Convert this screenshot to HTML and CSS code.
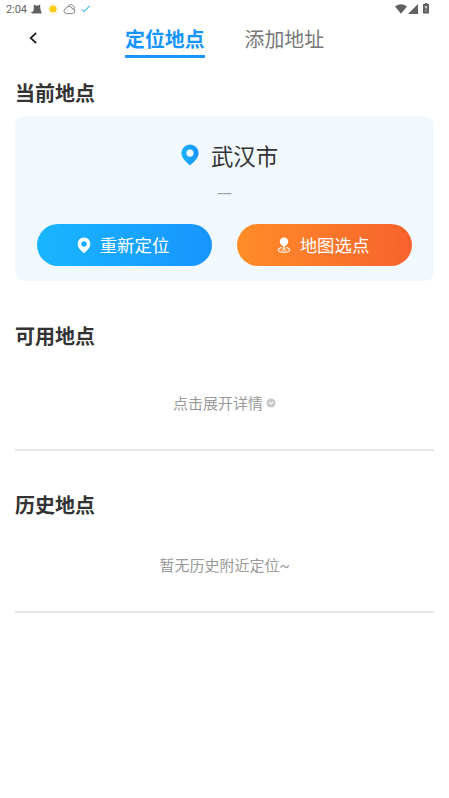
FILE: index.html
```html
<!DOCTYPE html>
<html lang="zh-CN">
<head>
<meta charset="utf-8">
<title>定位地点</title>
<link rel="stylesheet" href="styles.css">
</head>
<body>
<div class="status">
  <span class="time">2:04</span>
  <svg class="cat" width="11" height="10" viewBox="0 0 12 10"><path d="M3 0l2 1.300h3L10 0v4l.8 3 .9 2.800H1.200L0 8.500l1.200-.7 1 .4L3 5z" fill="#606060"/></svg>
  <svg class="sun" width="12" height="12" viewBox="0 0 12 12"><path d="M6 .8v10.400M.8 6h10.400M2.300 2.300l7.400 7.400M9.700 2.300L2.300 9.700" stroke="#fbdc7c" stroke-width="1.100"/><circle cx="6" cy="6" r="3.300" fill="#fccb12"/></svg>
  <svg class="cloud" width="13" height="12" viewBox="0 0 13 12" fill="none" stroke="#777" stroke-width=".9"><path d="M3.400 10.600a2.600 2.600 0 0 1-.5-5.100 3.400 3.400 0 0 1 6.300.1 2.500 2.500 0 0 1 .2 5zM4.800 3.300a3.300 3.300 0 1 1 6 3.500"/></svg>
  <svg class="check" width="10" height="8" viewBox="0 0 10 8"><path d="M1 4.200l2.200 2.200L8.600 1" fill="none" stroke="#55bde8" stroke-width="1.100"/></svg>
  <svg class="wifi" width="12" height="10" viewBox="0 0 12 10"><path d="M0 2.500Q6-2.100 12 2.500L6 9.800z" fill="#606060"/></svg>
  <svg class="signal" width="10" height="10" viewBox="0 0 10 10"><path d="M10 0v10H0z" fill="#606060"/></svg>
  <svg class="battery" width="6" height="11" viewBox="0 0 6 11"><path d="M1.700 0h2.600v1H6v9.500H0V1h1.700z" fill="#606060"/><path d="M1.500 3.200h3L3 6.300zM2.500 7h1v1.300h-1z" fill="#ddd"/></svg>
</div>
<header class="header">
  <svg class="back" width="9" height="12" viewBox="0 0 9 12"><path d="M7.200 1L1.600 6l5.600 5" fill="none" stroke="#222" stroke-width="1.700"/></svg>
  <nav class="tabs">
    <a class="tab active">定位地点</a>
    <a class="tab">添加地址</a>
  </nav>
</header>
<main>
  <section class="current">
    <h2>当前地点</h2>
    <div class="card">
      <div class="city">
        <svg width="18" height="22" viewBox="0 0 18 22"><defs><linearGradient id="pin"><stop stop-color="#1bb2ff"/><stop offset="1" stop-color="#1795ff"/></linearGradient></defs><path fill="url(#pin)" fill-rule="evenodd" d="M9 .5a8.600 8.600 0 0 1 8.600 8.600C17.600 14 13 18 9 21.500C5 18 .4 14 .4 9.100A8.600 8.600 0 0 1 9 .5zm0 5a3.600 3.600 0 1 0 0 7.200 3.600 3.600 0 0 0 0-7.200z"/></svg>
        <span>武汉市</span>
      </div>
      <div class="address">---</div>
      <div class="actions">
        <button class="button relocate">
          <svg width="14" height="17" viewBox="0 0 14 17"><path fill="#fff" fill-rule="evenodd" d="M7 .5a6.400 6.400 0 0 1 6.400 6.400C13.400 10.500 10 13.500 7 16.200 4 13.500.6 10.500.6 6.900A6.400 6.400 0 0 1 7 .5zm0 3.700a2.800 2.800 0 1 0 0 5.600 2.800 2.800 0 0 0 0-5.600z"/></svg>
          <span>重新定位</span>
        </button>
        <button class="button pick">
          <svg width="14" height="17" viewBox="0 0 14 17"><circle cx="7" cy="4.700" r="4.200" fill="#fff"/><path d="M7 8v5" stroke="#fff" stroke-width="1.500"/><path d="M5 10.500c-5 .6-5.300 4.700 2 4.700s7-4.100 2-4.700" fill="none" stroke="#ffe4d6" stroke-width="1.400"/><path d="M4.500 13h5" stroke="#ffe4d6"/></svg>
          <span>地图选点</span>
        </button>
      </div>
    </div>
  </section>
  <section class="available">
    <h2>可用地点</h2>
    <div class="notice"><span>点击展开详情</span><svg width="10" height="10" viewBox="0 0 10 10"><circle cx="5" cy="5" r="4.600" fill="#c9c9c9"/><path d="M2.800 4.100L5 6l2.200-1.900" fill="none" stroke="#fff" stroke-width="1.100"/></svg></div>
  </section>
  <section class="history">
    <h2>历史地点</h2>
    <div class="notice"><span>暂无历史附近定位<span class="latin">~</span></span></div>
  </section>
</main>
</body>
</html>
```
FILE: styles.css
```css
* { box-sizing: border-box; }
body {
  margin: 0;
  background: #fff;
  color: #333;
  font-family: "Noto Sans CJK SC", sans-serif;
}
svg { display: block; flex: none; }
.status {
  display: flex;
  align-items: center;
  height: 18px;
  padding: 0 20.5px 0 6px;
}
.time {
  width: 25px;
  font: 11px/18px Roboto, sans-serif;
  letter-spacing: -.1px;
  padding-top: 1px;
  color: #666;
}
.sun { margin-left: 5px; }
.cloud { margin-left: 4px; }
.check { margin-left: 5px; }
.wifi { margin-left: auto; }
.signal { margin-left: 1px; }
.battery { margin-left: 5px; margin-top: -1px; }
.header {
  display: flex;
  height: 42px;
  padding-left: 29px;
}
.back { margin-top: 14px; }
.tabs {
  display: flex;
  gap: 40px;
  margin-left: 87px;
}
.tab {
  height: 40px;
  padding-top: 1px;
  font-size: 19.9px;
  line-height: 40px;
  color: #777;
}
.active {
  border-bottom: 3px solid #1795ff;
  border-radius: 1px;
  color: #1795ff;
  font-weight: 700;
}
main { padding: 0 15px; }
h2 {
  margin: 0;
  font-size: 20px;
  line-height: 30px;
  font-weight: 700;
}
.current { padding-top: 18px; }
.card {
  height: 165px;
  margin-top: 8px;
  padding: 22px 22px 0;
  border-radius: 9px;
  background: #f1f9ff;
}
.city {
  display: flex;
  align-items: center;
  justify-content: center;
  gap: 12px;
  height: 34px;
  padding-left: 10px;
  font-size: 22.4px;
  line-height: 34px;
}
.city span { margin-top: -1px; }
.address {
  height: 52px;
  font: 17px/42px Roboto, sans-serif;
  text-align: center;
  color: #999;
}
.actions {
  display: flex;
  gap: 25px;
}
.button {
  display: flex;
  flex: 1;
  align-items: center;
  justify-content: center;
  gap: 9px;
  height: 42px;
  padding: 0 3px 0 0;
  border: 0;
  border-radius: 21px;
  color: #fff;
  font: 17.4px/42px "Noto Sans CJK SC", sans-serif;
}
.relocate { background: linear-gradient(90deg, #19b6ff, #1795ff); }
.pick { background: linear-gradient(90deg, #ff8d28, #f7622c); }
.available {
  height: 130px;
  margin-top: 40px;
  border-bottom: 2px solid #e6e6e6;
}
.history {
  height: 123px;
  margin-top: 39px;
  border-bottom: 2px solid #e6e6e6;
}
.notice {
  display: flex;
  align-items: center;
  justify-content: center;
  gap: 3px;
  height: 24px;
  margin-top: 40px;
  font-size: 15px;
  line-height: 24px;
  color: #999;
}
.history .notice { margin-top: 33px; }
.latin { font-family: Roboto, sans-serif; }
```
